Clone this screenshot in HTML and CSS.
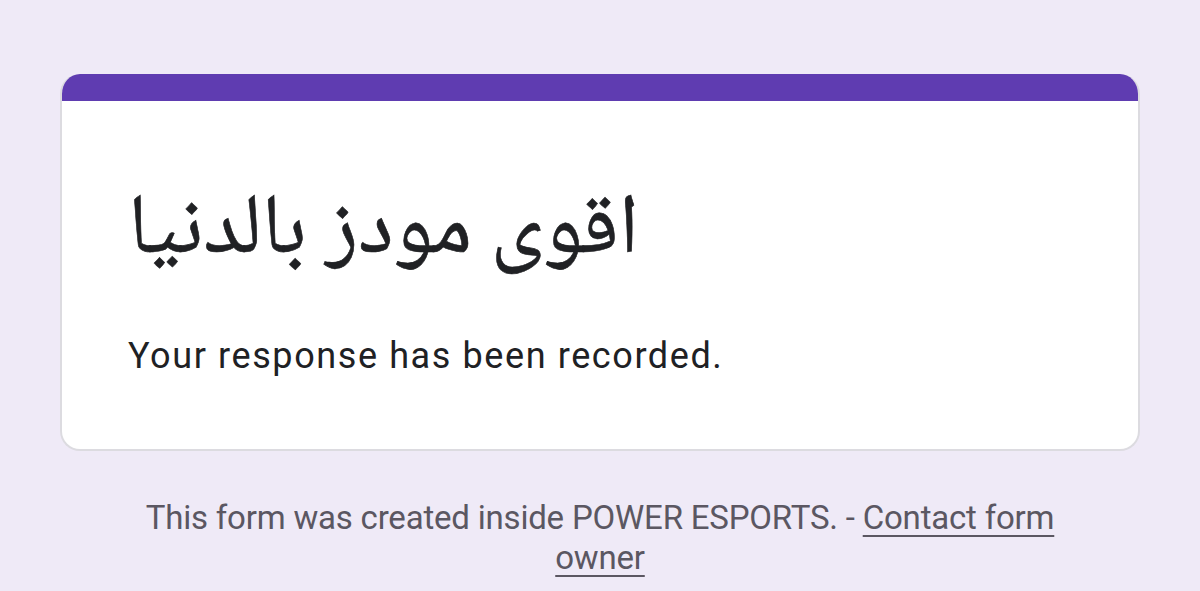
FILE: index.html
```html
<!DOCTYPE html>
<html lang="en">
<head>
<meta charset="utf-8">
<title>Form response</title>
<link rel="stylesheet" href="styles.css">
</head>
<body>
<main class="page">
  <section class="card">
    <div class="card-accent"></div>
    <div class="card-body">
      <h1 class="form-title">اقوى مودز بالدنيا</h1>
      <p class="confirmation">Your response has been recorded.</p>
    </div>
  </section>
  <footer class="footer">
    <p class="footer-text">This form was created inside POWER ESPORTS. - <a class="footer-link" href="#">Contact form owner</a></p>
  </footer>
</main>
</body>
</html>
```

FILE: styles.css
```css
html, body {
  margin: 0;
  padding: 0;
  background: #efeaf7;
}

.page {
  padding: 74px 60px 0;
  font-family: Roboto, "Noto Sans", "DejaVu Sans", sans-serif;
}

.card {
  background: #ffffff;
  border: 2px solid #dcdbe0;
  border-top: none;
  border-radius: 20px;
  overflow: hidden;
}

.card-accent {
  height: 27px;
  background: #5f3cb1;
  margin: 0 -2px;
}

.card-body {
  padding: 78px 66px 71px;
}

.form-title {
  margin: 0;
  font-family: "Noto Naskh Arabic", "Noto Sans Arabic", "DejaVu Sans", sans-serif;
  font-weight: 400;
  font-size: 85px;
  line-height: 110px;
  color: #202124;
  -webkit-text-stroke: 0.6px #202124;
}

.confirmation {
  margin: 45px 0 0;
  font-size: 36px;
  line-height: 44px;
  letter-spacing: 1.6px;
  color: #202124;
}

.footer {
  display: flex;
  justify-content: center;
  padding-top: 47px;
}

.footer-text {
  margin: 0;
  width: 940px;
  text-align: center;
  font-size: 33px;
  line-height: 40px;
  letter-spacing: -0.2px;
  color: #5b5762;
}

.footer-link {
  color: #5b5762;
  text-decoration: underline;
  text-underline-offset: 6px;
  text-decoration-thickness: 2px;
}
```
